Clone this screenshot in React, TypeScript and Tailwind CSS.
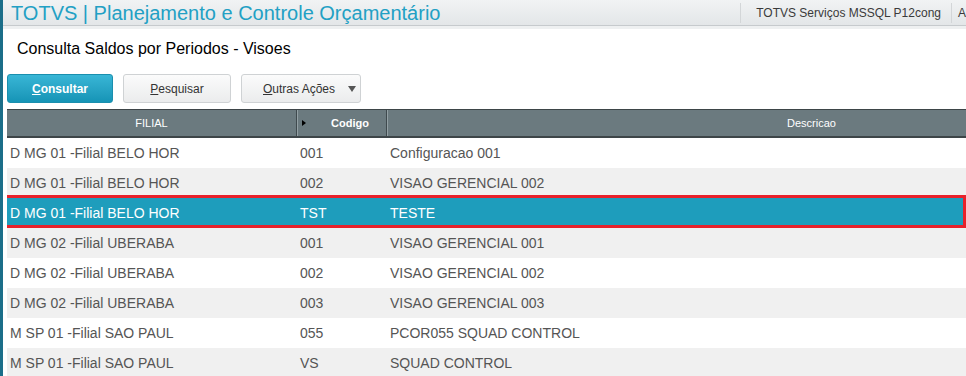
import React from "react";

type Row = { filial: string; codigo: string; descricao: string; selected?: boolean };

const rows: Row[] = [
  { filial: "D MG 01 -Filial BELO HOR", codigo: "001", descricao: "Configuracao 001" },
  { filial: "D MG 01 -Filial BELO HOR", codigo: "002", descricao: "VISAO GERENCIAL 002" },
  { filial: "D MG 01 -Filial BELO HOR", codigo: "TST", descricao: "TESTE", selected: true },
  { filial: "D MG 02 -Filial UBERABA", codigo: "001", descricao: "VISAO GERENCIAL 001" },
  { filial: "D MG 02 -Filial UBERABA", codigo: "002", descricao: "VISAO GERENCIAL 002" },
  { filial: "D MG 02 -Filial UBERABA", codigo: "003", descricao: "VISAO GERENCIAL 003" },
  { filial: "M SP 01 -Filial SAO PAUL", codigo: "055", descricao: "PCOR055 SQUAD CONTROL" },
  { filial: "M SP 01 -Filial SAO PAUL", codigo: "VS", descricao: "SQUAD CONTROL" },
];

export default function App() {
  return (
    <div
      className="flex h-[376px] w-full overflow-hidden bg-white"
      style={{ fontFamily: '"Liberation Sans", Arial, sans-serif' }}
    >
      {/* left accent strip */}
      <div className="w-[3px] shrink-0 bg-[#1b6e89]" />

      <div className="flex min-w-0 flex-1 flex-col">
        {/* Top bar */}
        <div className="flex h-[26px] shrink-0 items-center border-b border-[#c6cacd] bg-gradient-to-b from-[#f1f3f4] to-[#e3e6e8]">
          <div className="flex-1 whitespace-nowrap pl-[8px] text-[20px] leading-[24px] text-[#22a0c4]">
            TOTVS | Planejamento e Controle Orçamentário
          </div>
          <div className="flex h-[20px] items-center border-l border-[#d3d6d8] pl-[15px] pr-[10px] text-[12px] whitespace-nowrap text-[#3a3a3a]">
            TOTVS Serviços MSSQL P12cong
          </div>
          <div className="flex h-[20px] w-[15px] items-center overflow-hidden border-l border-[#d3d6d8] pl-[6px] text-[12px] text-[#3a3a3a]">
            A
          </div>
        </div>
        <div className="h-[3px] shrink-0 bg-[#eef0f1]" />

        {/* Title */}
        <div className="mt-[11px] pl-[14px] text-[16px] leading-[18px] text-black">
          Consulta Saldos por Periodos - Visoes
        </div>

        {/* Buttons */}
        <div className="mt-[16px] flex gap-[10px] pl-[4px]">
          <button className="h-[29px] w-[106px] rounded-[3px] border border-[#1a8fae] bg-gradient-to-b from-[#38b6d6] to-[#1594b6] text-[12px] font-bold text-white">
            <span className="underline">C</span>onsultar
          </button>
          <button className="h-[29px] w-[108px] rounded-[3px] border border-[#cfd2d4] bg-gradient-to-b from-[#fbfbfb] to-[#ebeced] text-[12px] text-[#333]">
            <span className="underline">P</span>esquisar
          </button>
          <button className="relative flex h-[29px] w-[120px] items-center rounded-[3px] border border-[#cfd2d4] bg-gradient-to-b from-[#fbfbfb] to-[#ebeced] pl-[21px] text-[12px] text-[#333]">
            <span>
              <span className="underline">O</span>utras Ações
            </span>
            <span className="ml-auto mr-[4px] h-0 w-0 border-x-[4px] border-t-[6px] border-x-transparent border-t-[#555]" />
          </button>
        </div>

        {/* Grid */}
        <div className="mt-[6px] ml-[4px] overflow-hidden">
          <div className="w-[1228px]">
            <div className="grid h-[29px] grid-cols-[290px_90px_848px] border-t border-b-2 border-t-[#3d4548] border-b-[#3d4548] bg-[#6b7a7f] text-white">
              <div className="flex items-center justify-center border-r border-[#3f4a4e] text-[11px]">
                FILIAL
              </div>
              <div className="flex items-center border-l border-r border-l-[#93a0a4] border-r-[#3f4a4e] pl-[4px]">
                <span className="h-0 w-0 border-y-[3px] border-l-[4px] border-y-transparent border-l-black" />
                <span className="ml-[25px] text-[11px] font-bold">Codigo</span>
              </div>
              <div className="flex items-center justify-center border-l border-[#93a0a4] text-[11px]">
                Descricao
              </div>
            </div>

            {rows.map((r, i) => (
              <div
                key={i}
                className={`relative grid h-[30px] grid-cols-[290px_90px_848px] items-center text-[14px] ${
                  r.selected
                    ? "bg-[#1e9dbc] text-white"
                    : i % 2 === 1
                    ? "bg-[#f0f0f0] text-[#555]"
                    : "bg-white text-[#555]"
                }`}
              >
                <div className="pl-[3px] whitespace-nowrap">{r.filial}</div>
                <div className="pl-[3px]">{r.codigo}</div>
                <div className="pl-[3px] whitespace-nowrap">{r.descricao}</div>
                {r.selected && (
                  <div className="pointer-events-none absolute -top-[3px] -left-[3px] bottom-0 w-[962px] border-[3px] border-[#e8212b]" />
                )}
              </div>
            ))}
          </div>
        </div>
      </div>
    </div>
  );
}
